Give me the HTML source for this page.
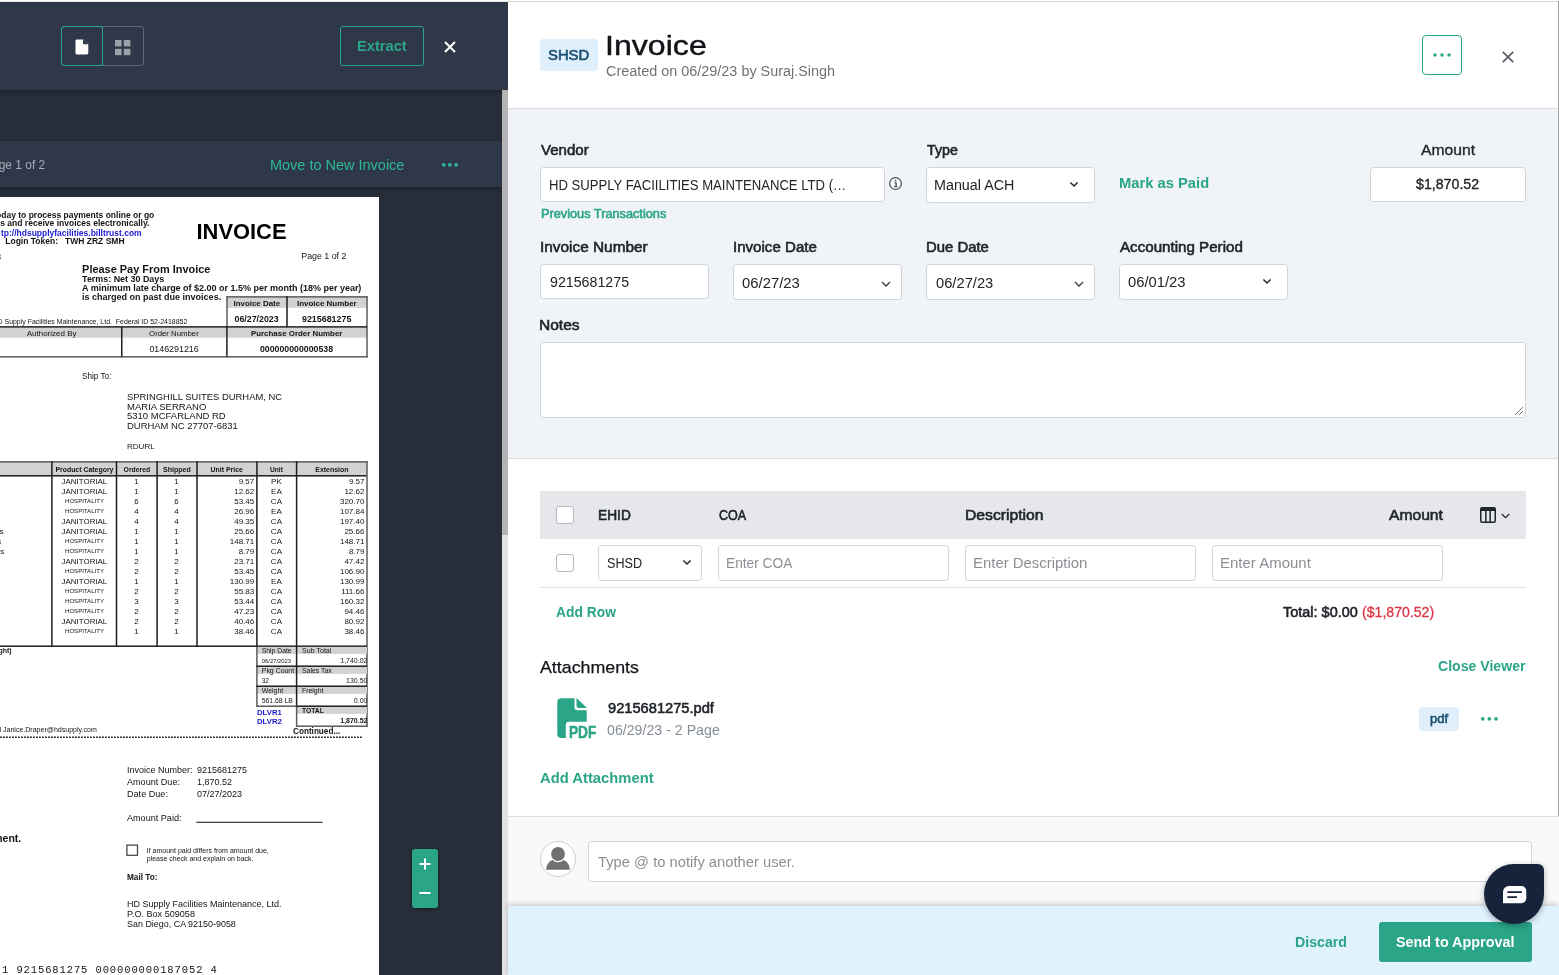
<!DOCTYPE html>
<html><head><meta charset="utf-8"><title>Invoice</title>
<style>
html,body{margin:0;padding:0}
body{width:1559px;height:975px;overflow:hidden;position:relative;background:#fff;font-family:"Liberation Sans",sans-serif;color:#212529}
.a{position:absolute;box-sizing:border-box}
.t{position:absolute;white-space:pre;line-height:1;display:block;transform-origin:0 0}
.inp{position:absolute;box-sizing:border-box;background:#fff;border:1px solid #ced4da;border-radius:3.5px}
.cb{position:absolute;box-sizing:border-box;background:#fff;border:1px solid #b3b9bf;border-radius:3px;width:18px;height:18px}
svg{position:absolute;overflow:visible}
</style></head><body>

<!-- ================= LEFT PANEL ================= -->
<div class="a" style="left:0;top:0;width:508px;height:975px;overflow:hidden">
<div class="a" style="left:0;top:2px;width:508px;height:973px;background:#272e3a"></div>
<div class="a" style="left:0;top:1px;width:508px;height:1px;background:#eceff1"></div>
<!-- viewer backdrop + pdf page -->
<div id="pdf" class="a" style="left:0;top:197px;width:379px;height:778px;background:#fff;overflow:hidden">
<svg width="379" height="778" viewBox="0 0 379 778" style="left:0;top:0"><g transform="translate(0,-197)"><rect x="227" y="297" width="140" height="10.8" fill="#d2d2d2"/><rect x="-5" y="327.5" width="372" height="10.2" fill="#d2d2d2"/><rect x="226.3" y="296.1" width="141.39999999999998" height="1.5" fill="#5c5c5c"/><rect x="226.25" y="296.1" width="1.5" height="30.799999999999955" fill="#5c5c5c"/><rect x="366.25" y="296.1" width="1.5" height="61.39999999999998" fill="#5c5c5c"/><rect x="286.25" y="296.1" width="1.5" height="30.799999999999955" fill="#1e1e1e"/><rect x="-5" y="326.15" width="372" height="1.5" fill="#1e1e1e"/><rect x="121.0" y="326.9" width="1.5" height="30.600000000000023" fill="#1e1e1e"/><rect x="226.15" y="326.9" width="1.5" height="30.600000000000023" fill="#1e1e1e"/><rect x="-5" y="356.05" width="372.7" height="1.5" fill="#5c5c5c"/><rect x="-5" y="462" width="372" height="13.5" fill="#d2d2d2"/><rect x="-5" y="461.1" width="372.7" height="1.5" fill="#5c5c5c"/><rect x="-5" y="475.05" width="372" height="1.5" fill="#1e1e1e"/><rect x="51.15" y="461.1" width="1.5" height="185.79999999999995" fill="#1e1e1e"/><rect x="115.75" y="461.1" width="1.5" height="185.79999999999995" fill="#1e1e1e"/><rect x="156.35" y="461.1" width="1.5" height="185.79999999999995" fill="#1e1e1e"/><rect x="196.25" y="461.1" width="1.5" height="185.79999999999995" fill="#1e1e1e"/><rect x="256.15" y="461.1" width="1.5" height="185.79999999999995" fill="#1e1e1e"/><rect x="295.85" y="461.1" width="1.5" height="185.79999999999995" fill="#1e1e1e"/><rect x="366.25" y="461.1" width="1.5" height="265.79999999999995" fill="#5c5c5c"/><rect x="-5" y="645.45" width="372" height="1.5" fill="#1e1e1e"/><rect x="257" y="646.9" width="110" height="7" fill="#d2d2d2"/><rect x="257" y="666.9" width="110" height="7" fill="#d2d2d2"/><rect x="257" y="686.9" width="110" height="7" fill="#d2d2d2"/><rect x="296.6" y="706.9" width="70.4" height="7" fill="#d2d2d2"/><rect x="256.15" y="646.9" width="1.5" height="60.0" fill="#5c5c5c"/><rect x="295.85" y="646" width="1.5" height="60.89999999999998" fill="#1e1e1e"/><rect x="295.85" y="706.9" width="1.5" height="20.0" fill="#5c5c5c"/><rect x="256.2" y="665.45" width="110.80000000000001" height="1.5" fill="#1e1e1e"/><rect x="256.2" y="685.45" width="110.80000000000001" height="1.5" fill="#1e1e1e"/><rect x="256.2" y="705.45" width="40.400000000000034" height="1.5" fill="#5c5c5c"/><rect x="296.6" y="705.45" width="70.39999999999998" height="1.5" fill="#1e1e1e"/><rect x="295.9" y="725.45" width="71.80000000000001" height="1.5" fill="#5c5c5c"/><line x1="0" y1="737.2" x2="362" y2="737.2" stroke="#222" stroke-width="1.4" stroke-dasharray="1.8 1.2"/><rect x="196.25" y="821.75" width="126.25" height="1.1" fill="#222"/><rect x="126.9" y="845.1" width="10.6" height="10.2" fill="none" stroke="#4a4a4a" stroke-width="1.3"/></g></svg>
<div style="position:absolute;left:0;top:0;width:379px;height:778px;will-change:transform">
<span class="t" style="left:-33.23px;top:14.00px;font-size:8.51px;font-weight:700;color:#141414;">Enroll today to process payments online or go</span>
<span class="t" style="left:-34.88px;top:22.00px;font-size:8.54px;font-weight:700;color:#141414;">paperless and receive invoices electronically.</span>
<span class="t" style="left:0.95px;top:32.00px;font-size:8.51px;font-weight:700;color:#1a1ad2;">tp://hdsupplyfacilities.billtrust.com</span>
<span class="t" style="left:5.25px;top:40.00px;font-size:8.5px;font-weight:700;color:#141414;">Login Token:   TWH ZRZ SMH</span>
<span class="t" style="left:-3.80px;top:56.00px;font-size:8.4px;font-weight:700;color:#141414;">8</span>
<span class="t" style="left:196.48px;top:24.00px;font-size:21.92px;font-weight:700;color:#000;">INVOICE</span>
<span class="t" style="left:301.25px;top:55.00px;font-size:8.84px;color:#141414;">Page 1 of 2</span>
<span class="t" style="left:82.10px;top:67.00px;font-size:10.95px;font-weight:700;color:#141414;">Please Pay From Invoice</span>
<span class="t" style="left:82.10px;top:78.00px;font-size:8.93px;font-weight:700;color:#141414;">Terms: Net 30 Days</span>
<span class="t" style="left:82.10px;top:87.00px;font-size:8.99px;font-weight:700;color:#141414;">A minimum late charge of $2.00 or 1.5% per month (18% per year)</span>
<span class="t" style="left:82.10px;top:96.00px;font-size:9.01px;font-weight:700;color:#141414;">is charged on past due invoices.</span>
<span class="t" style="left:233.52px;top:103.00px;font-size:7.92px;font-weight:700;color:#141414;">Invoice Date</span>
<span class="t" style="left:297.00px;top:103.00px;font-size:7.96px;font-weight:700;color:#141414;">Invoice Number</span>
<span class="t" style="left:234.52px;top:118.00px;font-size:8.82px;font-weight:700;color:#141414;">06/27/2023</span>
<span class="t" style="left:302.00px;top:118.00px;font-size:8.88px;font-weight:700;color:#141414;">9215681275</span>
<span class="t" style="left:-7.49px;top:122.00px;font-size:6.96px;color:#141414;">HD Supply Facilities Maintenance, Ltd.  Federal ID 52-2418852</span>
<span class="t" style="left:26.75px;top:133.00px;font-size:7.99px;color:#141414;">Authorized By</span>
<span class="t" style="left:149.12px;top:133.00px;font-size:7.78px;color:#141414;">Order Number</span>
<span class="t" style="left:250.88px;top:133.00px;font-size:7.93px;font-weight:700;color:#141414;">Purchase Order Number</span>
<span class="t" style="left:149.38px;top:148.00px;font-size:8.89px;color:#141414;">0146291216</span>
<span class="t" style="left:259.88px;top:148.00px;font-size:8.77px;font-weight:700;color:#141414;">000000000000538</span>
<span class="t" style="left:82.00px;top:176.00px;font-size:8.19px;color:#141414;">Ship To:</span>
<span class="t" style="left:127.00px;top:195.00px;font-size:9.44px;color:#141414;">SPRINGHILL SUITES DURHAM, NC</span>
<span class="t" style="left:127.00px;top:205.00px;font-size:9.52px;color:#141414;">MARIA SERRANO</span>
<span class="t" style="left:127.00px;top:214.00px;font-size:9.51px;color:#141414;">5310 MCFARLAND RD</span>
<span class="t" style="left:127.00px;top:224.00px;font-size:9.45px;color:#141414;">DURHAM NC 27707-6831</span>
<span class="t" style="left:127.00px;top:246.00px;font-size:8.04px;color:#141414;">RDURL</span>
<span class="t" style="left:55.38px;top:270.00px;font-size:6.93px;font-weight:700;color:#141414;">Product Category</span>
<span class="t" style="left:123.62px;top:270.00px;font-size:6.82px;font-weight:700;color:#141414;">Ordered</span>
<span class="t" style="left:163.00px;top:269.00px;font-size:7.04px;font-weight:700;color:#141414;">Shipped</span>
<span class="t" style="left:210.50px;top:270.00px;font-size:6.94px;font-weight:700;color:#141414;">Unit Price</span>
<span class="t" style="left:270.00px;top:270.00px;font-size:6.62px;font-weight:700;color:#141414;">Unit</span>
<span class="t" style="left:315.25px;top:270.00px;font-size:6.96px;font-weight:700;color:#141414;">Extension</span>
<span class="t" style="left:61.55px;top:281.00px;font-size:7.94px;color:#141414;">JANITORIAL</span>
<span class="t" style="left:134.30px;top:281.00px;font-size:8.0px;color:#141414;">1</span>
<span class="t" style="left:174.30px;top:281.00px;font-size:8.0px;color:#141414;">1</span>
<span class="t" style="left:238.68px;top:281.00px;font-size:8.0px;color:#141414;">9.57</span>
<span class="t" style="left:271.08px;top:281.00px;font-size:8.0px;color:#141414;">PK</span>
<span class="t" style="left:348.88px;top:281.00px;font-size:8.0px;color:#141414;">9.57</span>
<span class="t" style="left:61.55px;top:291.00px;font-size:7.94px;color:#141414;">JANITORIAL</span>
<span class="t" style="left:134.30px;top:291.00px;font-size:8.0px;color:#141414;">1</span>
<span class="t" style="left:174.30px;top:291.00px;font-size:8.0px;color:#141414;">1</span>
<span class="t" style="left:234.23px;top:291.00px;font-size:8.0px;color:#141414;">12.62</span>
<span class="t" style="left:271.08px;top:291.00px;font-size:8.0px;color:#141414;">EA</span>
<span class="t" style="left:344.43px;top:291.00px;font-size:8.0px;color:#141414;">12.62</span>
<span class="t" style="left:65.05px;top:301.00px;font-size:6.05px;color:#141414;">HOSPITALITY</span>
<span class="t" style="left:134.30px;top:301.00px;font-size:8.0px;color:#141414;">6</span>
<span class="t" style="left:174.30px;top:301.00px;font-size:8.0px;color:#141414;">6</span>
<span class="t" style="left:234.23px;top:301.00px;font-size:8.0px;color:#141414;">53.45</span>
<span class="t" style="left:270.86px;top:301.00px;font-size:8.0px;color:#141414;">CA</span>
<span class="t" style="left:339.98px;top:301.00px;font-size:8.0px;color:#141414;">320.70</span>
<span class="t" style="left:65.05px;top:311.00px;font-size:6.05px;color:#141414;">HOSPITALITY</span>
<span class="t" style="left:134.30px;top:311.00px;font-size:8.0px;color:#141414;">4</span>
<span class="t" style="left:174.30px;top:311.00px;font-size:8.0px;color:#141414;">4</span>
<span class="t" style="left:234.23px;top:311.00px;font-size:8.0px;color:#141414;">26.96</span>
<span class="t" style="left:271.08px;top:311.00px;font-size:8.0px;color:#141414;">EA</span>
<span class="t" style="left:339.98px;top:311.00px;font-size:8.0px;color:#141414;">107.84</span>
<span class="t" style="left:61.55px;top:321.00px;font-size:7.94px;color:#141414;">JANITORIAL</span>
<span class="t" style="left:134.30px;top:321.00px;font-size:8.0px;color:#141414;">4</span>
<span class="t" style="left:174.30px;top:321.00px;font-size:8.0px;color:#141414;">4</span>
<span class="t" style="left:234.23px;top:321.00px;font-size:8.0px;color:#141414;">49.35</span>
<span class="t" style="left:270.86px;top:321.00px;font-size:8.0px;color:#141414;">CA</span>
<span class="t" style="left:339.98px;top:321.00px;font-size:8.0px;color:#141414;">197.40</span>
<span class="t" style="left:61.55px;top:331.00px;font-size:7.94px;color:#141414;">JANITORIAL</span>
<span class="t" style="left:134.30px;top:331.00px;font-size:8.0px;color:#141414;">1</span>
<span class="t" style="left:174.30px;top:331.00px;font-size:8.0px;color:#141414;">1</span>
<span class="t" style="left:234.23px;top:331.00px;font-size:8.0px;color:#141414;">25.66</span>
<span class="t" style="left:270.86px;top:331.00px;font-size:8.0px;color:#141414;">CA</span>
<span class="t" style="left:344.43px;top:331.00px;font-size:8.0px;color:#141414;">25.66</span>
<span class="t" style="left:65.05px;top:341.00px;font-size:6.05px;color:#141414;">HOSPITALITY</span>
<span class="t" style="left:134.30px;top:341.00px;font-size:8.0px;color:#141414;">1</span>
<span class="t" style="left:174.30px;top:341.00px;font-size:8.0px;color:#141414;">1</span>
<span class="t" style="left:229.78px;top:341.00px;font-size:8.0px;color:#141414;">148.71</span>
<span class="t" style="left:270.86px;top:341.00px;font-size:8.0px;color:#141414;">CA</span>
<span class="t" style="left:339.98px;top:341.00px;font-size:8.0px;color:#141414;">148.71</span>
<span class="t" style="left:65.05px;top:351.00px;font-size:6.05px;color:#141414;">HOSPITALITY</span>
<span class="t" style="left:134.30px;top:351.00px;font-size:8.0px;color:#141414;">1</span>
<span class="t" style="left:174.30px;top:351.00px;font-size:8.0px;color:#141414;">1</span>
<span class="t" style="left:238.68px;top:351.00px;font-size:8.0px;color:#141414;">8.79</span>
<span class="t" style="left:270.86px;top:351.00px;font-size:8.0px;color:#141414;">CA</span>
<span class="t" style="left:348.88px;top:351.00px;font-size:8.0px;color:#141414;">8.79</span>
<span class="t" style="left:61.55px;top:361.00px;font-size:7.94px;color:#141414;">JANITORIAL</span>
<span class="t" style="left:134.30px;top:361.00px;font-size:8.0px;color:#141414;">2</span>
<span class="t" style="left:174.30px;top:361.00px;font-size:8.0px;color:#141414;">2</span>
<span class="t" style="left:234.23px;top:361.00px;font-size:8.0px;color:#141414;">23.71</span>
<span class="t" style="left:270.86px;top:361.00px;font-size:8.0px;color:#141414;">CA</span>
<span class="t" style="left:344.43px;top:361.00px;font-size:8.0px;color:#141414;">47.42</span>
<span class="t" style="left:65.05px;top:371.00px;font-size:6.05px;color:#141414;">HOSPITALITY</span>
<span class="t" style="left:134.30px;top:371.00px;font-size:8.0px;color:#141414;">2</span>
<span class="t" style="left:174.30px;top:371.00px;font-size:8.0px;color:#141414;">2</span>
<span class="t" style="left:234.23px;top:371.00px;font-size:8.0px;color:#141414;">53.45</span>
<span class="t" style="left:270.86px;top:371.00px;font-size:8.0px;color:#141414;">CA</span>
<span class="t" style="left:339.98px;top:371.00px;font-size:8.0px;color:#141414;">106.90</span>
<span class="t" style="left:61.55px;top:381.00px;font-size:7.94px;color:#141414;">JANITORIAL</span>
<span class="t" style="left:134.30px;top:381.00px;font-size:8.0px;color:#141414;">1</span>
<span class="t" style="left:174.30px;top:381.00px;font-size:8.0px;color:#141414;">1</span>
<span class="t" style="left:229.78px;top:381.00px;font-size:8.0px;color:#141414;">130.99</span>
<span class="t" style="left:271.08px;top:381.00px;font-size:8.0px;color:#141414;">EA</span>
<span class="t" style="left:339.98px;top:381.00px;font-size:8.0px;color:#141414;">130.99</span>
<span class="t" style="left:65.05px;top:391.00px;font-size:6.05px;color:#141414;">HOSPITALITY</span>
<span class="t" style="left:134.30px;top:391.00px;font-size:8.0px;color:#141414;">2</span>
<span class="t" style="left:174.30px;top:391.00px;font-size:8.0px;color:#141414;">2</span>
<span class="t" style="left:234.23px;top:391.00px;font-size:8.0px;color:#141414;">55.83</span>
<span class="t" style="left:270.86px;top:391.00px;font-size:8.0px;color:#141414;">CA</span>
<span class="t" style="left:341.17px;top:391.00px;font-size:8.0px;color:#141414;">111.66</span>
<span class="t" style="left:65.05px;top:401.00px;font-size:6.05px;color:#141414;">HOSPITALITY</span>
<span class="t" style="left:134.30px;top:401.00px;font-size:8.0px;color:#141414;">3</span>
<span class="t" style="left:174.30px;top:401.00px;font-size:8.0px;color:#141414;">3</span>
<span class="t" style="left:234.23px;top:401.00px;font-size:8.0px;color:#141414;">53.44</span>
<span class="t" style="left:270.86px;top:401.00px;font-size:8.0px;color:#141414;">CA</span>
<span class="t" style="left:339.98px;top:401.00px;font-size:8.0px;color:#141414;">160.32</span>
<span class="t" style="left:65.05px;top:411.00px;font-size:6.05px;color:#141414;">HOSPITALITY</span>
<span class="t" style="left:134.30px;top:411.00px;font-size:8.0px;color:#141414;">2</span>
<span class="t" style="left:174.30px;top:411.00px;font-size:8.0px;color:#141414;">2</span>
<span class="t" style="left:234.23px;top:411.00px;font-size:8.0px;color:#141414;">47.23</span>
<span class="t" style="left:270.86px;top:411.00px;font-size:8.0px;color:#141414;">CA</span>
<span class="t" style="left:344.43px;top:411.00px;font-size:8.0px;color:#141414;">94.46</span>
<span class="t" style="left:61.55px;top:421.00px;font-size:7.94px;color:#141414;">JANITORIAL</span>
<span class="t" style="left:134.30px;top:421.00px;font-size:8.0px;color:#141414;">2</span>
<span class="t" style="left:174.30px;top:421.00px;font-size:8.0px;color:#141414;">2</span>
<span class="t" style="left:234.23px;top:421.00px;font-size:8.0px;color:#141414;">40.46</span>
<span class="t" style="left:270.86px;top:421.00px;font-size:8.0px;color:#141414;">CA</span>
<span class="t" style="left:344.43px;top:421.00px;font-size:8.0px;color:#141414;">80.92</span>
<span class="t" style="left:65.05px;top:431.00px;font-size:6.05px;color:#141414;">HOSPITALITY</span>
<span class="t" style="left:134.30px;top:431.00px;font-size:8.0px;color:#141414;">1</span>
<span class="t" style="left:174.30px;top:431.00px;font-size:8.0px;color:#141414;">1</span>
<span class="t" style="left:234.23px;top:431.00px;font-size:8.0px;color:#141414;">38.46</span>
<span class="t" style="left:270.86px;top:431.00px;font-size:8.0px;color:#141414;">CA</span>
<span class="t" style="left:344.43px;top:431.00px;font-size:8.0px;color:#141414;">38.46</span>
<span class="t" style="left:-0.40px;top:331.00px;font-size:8.0px;color:#141414;">s</span>
<span class="t" style="left:-2.80px;top:341.00px;font-size:8.0px;color:#141414;">s</span>
<span class="t" style="left:-5.58px;top:351.00px;font-size:8.0px;color:#141414;">Cs</span>
<span class="t" style="left:-1.58px;top:450.00px;font-size:7px;font-weight:700;color:#141414;">ght)</span>
<span class="t" style="left:261.75px;top:451.00px;font-size:6.81px;color:#141414;">Ship Date</span>
<span class="t" style="left:302.00px;top:451.00px;font-size:7.09px;color:#141414;">Sub Total</span>
<span class="t" style="left:261.75px;top:462.00px;font-size:5.86px;color:#141414;">06/27/2023</span>
<span class="t" style="left:340.25px;top:460.00px;font-size:7px;color:#141414;">1,740.02</span>
<span class="t" style="left:261.75px;top:471.00px;font-size:6.95px;color:#141414;">Pkg Count</span>
<span class="t" style="left:302.00px;top:471.00px;font-size:6.92px;color:#141414;">Sales Tax</span>
<span class="t" style="left:261.75px;top:481.00px;font-size:6.5px;color:#141414;">32</span>
<span class="t" style="left:346.08px;top:480.00px;font-size:7px;color:#141414;">130.50</span>
<span class="t" style="left:261.75px;top:491.00px;font-size:6.93px;color:#141414;">Weight</span>
<span class="t" style="left:302.00px;top:491.00px;font-size:6.89px;color:#141414;">Freight</span>
<span class="t" style="left:261.75px;top:501.00px;font-size:6.84px;color:#141414;">561.68 LB</span>
<span class="t" style="left:353.87px;top:500.00px;font-size:7px;color:#141414;">0.00</span>
<span class="t" style="left:302.00px;top:511.00px;font-size:6.73px;font-weight:700;color:#141414;">TOTAL</span>
<span class="t" style="left:340.25px;top:520.00px;font-size:7px;font-weight:700;color:#141414;">1,870.52</span>
<span class="t" style="left:257.00px;top:512.00px;font-size:7.76px;font-weight:700;color:#1a1ad2;">DLVR1</span>
<span class="t" style="left:257.00px;top:521.00px;font-size:7.76px;font-weight:700;color:#1a1ad2;">DLVR2</span>
<span class="t" style="left:-16.55px;top:529.00px;font-size:7.04px;color:#141414;">Email Janice.Draper@hdsupply.com</span>
<span class="t" style="left:293.00px;top:531.00px;font-size:8.18px;font-weight:700;color:#141414;">Continued...</span>
<span class="t" style="left:127.00px;top:569.00px;font-size:9.0px;color:#141414;">Invoice Number:</span>
<span class="t" style="left:197.00px;top:569.00px;font-size:8.99px;color:#141414;">9215681275</span>
<span class="t" style="left:127.00px;top:581.00px;font-size:9.08px;color:#141414;">Amount Due:</span>
<span class="t" style="left:197.00px;top:581.00px;font-size:8.99px;color:#141414;">1,870.52</span>
<span class="t" style="left:127.00px;top:593.00px;font-size:9.11px;color:#141414;">Date Due:</span>
<span class="t" style="left:197.00px;top:593.00px;font-size:8.99px;color:#141414;">07/27/2023</span>
<span class="t" style="left:127.00px;top:617.00px;font-size:9.08px;color:#141414;">Amount Paid:</span>
<span class="t" style="left:-24.88px;top:636.00px;font-size:10.5px;font-weight:700;color:#141414;">payment.</span>
<span class="t" style="left:146.75px;top:650.00px;font-size:7.01px;color:#141414;">If amount paid differs from amount due,</span>
<span class="t" style="left:146.75px;top:658.00px;font-size:6.99px;color:#141414;">please check and explain on back.</span>
<span class="t" style="left:127.00px;top:677.00px;font-size:8.25px;font-weight:700;color:#141414;">Mail To:</span>
<span class="t" style="left:127.00px;top:703.00px;font-size:9.01px;color:#141414;">HD Supply Facilities Maintenance, Ltd.</span>
<span class="t" style="left:127.00px;top:713.00px;font-size:9.08px;color:#141414;">P.O. Box 509058</span>
<span class="t" style="left:127.00px;top:723.00px;font-size:8.95px;color:#141414;">San Diego, CA 92150-9058</span>
<span class="t" style="left:2.00px;top:768.00px;font-size:10.5px;letter-spacing:0.889px;color:#141414;font-family:'Liberation Mono',monospace;">1 9215681275 000000000187052 4</span>
</div>
</div>
<!-- page header bar -->
<div class="a" style="left:0;top:141px;width:502px;height:46px;background:#2f3848;box-shadow:0 2px 5px rgba(0,0,0,.35)"></div>
<!-- top bar -->
<div class="a" style="left:0;top:2px;width:508px;height:88px;background:#2f3848;box-shadow:0 2px 4px rgba(0,0,0,.3)"></div>
<!-- scrollbar -->
<div class="a" style="left:502px;top:90px;width:6px;height:885px;background:#e2e2e2"></div>
<div class="a" style="left:502px;top:90px;width:6px;height:445px;background:#b4b4b4"></div>
<!-- view toggle -->
<div class="a" style="left:61px;top:26px;width:83px;height:40px;border:1px solid #5d6675;border-radius:3px"></div>
<div class="a" style="left:61px;top:26px;width:42px;height:40px;border:1px solid #2aa587;border-radius:3px 0 0 3px"></div>
<svg style="left:75.2px;top:39px" width="13.8" height="16" viewBox="0 0 14 17" preserveAspectRatio="none"><path d="M2 0.5h6.2l5.3 5.3V15a1.5 1.5 0 0 1-1.5 1.5H2A1.5 1.5 0 0 1 .5 15V2A1.5 1.5 0 0 1 2 .5z" fill="#fff"/><path d="M8.2 .5v4.2a1 1 0 0 0 1 1h4.3z" fill="#2f3848"/></svg>
<svg style="left:115.4px;top:39.5px" width="15.4" height="15.2" viewBox="0 0 15.4 15.2"><g fill="#9b9fa7"><rect x="0" y="0" width="6.6" height="6.4"/><rect x="8.8" y="0" width="6.6" height="6.4"/><rect x="0" y="8.800" width="6.6" height="6.4"/><rect x="8.8" y="8.800" width="6.6" height="6.4"/></g></svg>
<!-- extract -->
<div class="a" style="left:340px;top:26px;width:84px;height:40px;border:1px solid #2aa587;border-radius:3px"></div>
<svg style="left:444px;top:41px" width="12" height="12" viewBox="0 0 12 12"><path d="M1 1L11 11M11 1L1 11" stroke="#fff" stroke-width="2" fill="none"/></svg>
<!-- dots -->
<svg style="left:441px;top:162px" width="18" height="6" viewBox="0 0 18 6"><g fill="#2db898"><circle cx="2.75" cy="2.800" r="1.900"/><circle cx="8.9" cy="2.800" r="1.900"/><circle cx="15.1" cy="2.800" r="1.900"/></g></svg>
<!-- zoom control -->
<div class="a" style="left:412px;top:849px;width:26px;height:59px;background:#2aa587;border-radius:3px;box-shadow:0 1px 4px rgba(0,0,0,.4)"></div>
<svg style="left:419px;top:858px" width="12" height="12" viewBox="0 0 12 12"><path d="M6 0.5V11.5M0.5 6H11.5" stroke="#fff" stroke-width="2" fill="none"/></svg>
<svg style="left:419px;top:887px" width="12" height="12" viewBox="0 0 12 12"><path d="M0.5 6H11.5" stroke="#fff" stroke-width="2" fill="none"/></svg>

</div>
<!-- ================= RIGHT PANEL ================= -->
<div class="a" style="left:508px;top:1px;width:1051px;height:1px;background:#d4d4d4"></div>
<div class="a" style="left:508px;top:108px;width:1050px;height:351px;background:#f0f4f8;border-top:1px solid #d9dee3;border-bottom:1px solid #d9dee3"></div>
<div class="a" style="left:508px;top:816px;width:1051px;height:90px;background:#f8f9fa;border-top:1px solid #dee2e6"></div>
<div class="a" style="left:508px;top:906px;width:1051px;height:69px;background:#e0f2fe;box-shadow:0 -2px 5px rgba(0,0,0,.18)"></div>
<div class="a" style="left:1558px;top:1px;width:1px;height:815px;background:#a2a2a2"></div>

<!-- header -->
<div class="a" style="left:540px;top:39px;width:57.5px;height:32px;background:#dff0fc;border-radius:3px"></div>
<div class="a" style="left:1422px;top:35px;width:40px;height:40px;border:1px solid #2aa587;border-radius:4px;background:#fff"></div>
<svg style="left:1433.3px;top:52px" width="18" height="6" viewBox="0 0 18 6"><g fill="#2aa587"><circle cx="2" cy="3" r="1.75"/><circle cx="9" cy="3" r="1.75"/><circle cx="16" cy="3" r="1.75"/></g></svg>
<svg style="left:1502px;top:51px" width="12" height="12" viewBox="0 0 12 12"><path d="M0.8 0.8L11.2 11.2M11.2 0.8L0.8 11.2" stroke="#5a5f66" stroke-width="1.8" fill="none"/></svg>

<!-- form inputs -->
<div class="inp" style="left:540px;top:167px;width:345px;height:35px"></div>
<svg style="left:888.95px;top:177.4px" width="13" height="13" viewBox="0 0 13 13"><circle cx="6.5" cy="6.5" r="5.850" fill="#fff" stroke="#50565c" stroke-width="1.300"/><path d="M5.300 5.900H7.100V9.500M5.100 9.500H8.300" stroke="#50565c" stroke-width="1.300" fill="none"/><circle cx="6.500" cy="3.700" r=".9" fill="#50565c"/></svg>
<div class="inp" style="left:926px;top:167px;width:169px;height:36px"></div>
<svg style="left:1069.05px;top:181.45px" width="10" height="7" viewBox="0 0 10 7"><path d="M1.400 1.500L5 5L8.600 1.500" stroke="#212529" stroke-width="1.500" fill="none"/></svg>
<div class="inp" style="left:1370px;top:167px;width:156px;height:35px"></div>

<div class="inp" style="left:540px;top:264px;width:169px;height:35px"></div>
<div class="inp" style="left:733px;top:264px;width:169px;height:36px"></div>
<svg style="left:881px;top:281px" width="10" height="6" viewBox="0 0 10 6"><path d="M1 1L5 5L9 1" stroke="#343a40" stroke-width="1.3" fill="none"/></svg>
<div class="inp" style="left:926px;top:264px;width:169px;height:36px"></div>
<svg style="left:1074px;top:281px" width="10" height="6" viewBox="0 0 10 6"><path d="M1 1L5 5L9 1" stroke="#343a40" stroke-width="1.3" fill="none"/></svg>
<div class="inp" style="left:1119px;top:264px;width:169px;height:36px"></div>
<svg style="left:1261.75px;top:278.20px" width="10" height="7" viewBox="0 0 10 7"><path d="M1.400 1.500L5 5L8.600 1.500" stroke="#212529" stroke-width="1.500" fill="none"/></svg>
<div class="inp" style="left:540px;top:342px;width:986px;height:76px"></div>
<svg style="left:1514px;top:406px" width="10" height="10" viewBox="0 0 10 10"><path d="M9 1L1 9M9 5L5 9" stroke="#777" stroke-width="1" fill="none"/></svg>

<!-- line items table -->
<div class="a" style="left:540px;top:491px;width:986px;height:48px;background:#e5e7eb"></div>
<div class="cb" style="left:556px;top:506px"></div>
<div class="cb" style="left:556px;top:554px"></div>
<div class="inp" style="left:598px;top:545px;width:104px;height:36px"></div>
<svg style="left:681.75px;top:559.40px" width="10" height="7" viewBox="0 0 10 7"><path d="M1.400 1.500L5 5L8.600 1.500" stroke="#212529" stroke-width="1.500" fill="none"/></svg>
<div class="inp" style="left:718px;top:545px;width:231px;height:36px"></div>
<div class="inp" style="left:965px;top:545px;width:231px;height:36px"></div>
<div class="inp" style="left:1212px;top:545px;width:231px;height:36px"></div>
<div class="a" style="left:540px;top:587px;width:986px;height:1px;background:#dee2e6"></div>
<svg style="left:1480px;top:507px" width="16" height="16" viewBox="0 0 16 16"><path d="M2 0h12a2 2 0 0 1 2 2v12a2 2 0 0 1-2 2H2a2 2 0 0 1-2-2V2a2 2 0 0 1 2-2zm-.5 4v10.5h3.6V4zm5.1 0v10.5h2.8V4zm4.3 0v10.5h3.6V4z" fill="#212529" fill-rule="evenodd"/></svg>
<svg style="left:1500.5px;top:513px" width="9" height="6" viewBox="0 0 9 6"><path d="M.8 1L4.5 4.7L8.2 1" stroke="#212529" stroke-width="1.2" fill="none"/></svg>

<!-- attachments -->
<svg style="left:557px;top:698px" width="40" height="40" viewBox="0 0 40 40"><path d="M4.300 .2h13.200v9a3 3 0 0 0 3 3H29.700v11.500H12a3.200 3.200 0 0 0-3.200 3.200V40H4.300a4 4 0 0 1-4-4V4.200a4 4 0 0 1 4-4z" fill="#2aa587"/><path d="M19.5 0l10.5 10h-8a2.5 2.5 0 0 1-2.5-2.5z" fill="#2aa587"/></svg>
<div class="a" style="left:1419px;top:707px;width:40px;height:24px;background:#dff0fc;border-radius:4px"></div>
<svg style="left:1479.5px;top:716px" width="18" height="6" viewBox="0 0 18 6"><g fill="#2aa587"><circle cx="2.7" cy="2.8" r="1.85"/><circle cx="9.3" cy="2.8" r="1.85"/><circle cx="16" cy="2.8" r="1.85"/></g></svg>

<!-- comments -->
<div class="a" style="left:540px;top:841px;width:36px;height:36px;border-radius:50%;background:#fff;border:1px solid #cfcfcf"></div>
<svg style="left:546px;top:847px" width="24" height="24" viewBox="0 0 24 24"><circle cx="12" cy="7" r="6.900" fill="#707070"/><path d="M.2 22.800C.2 17.500 3.600 13.900 6.600 13.100C8 14.500 10 15.300 12 15.300S16 14.500 17.400 13.100C20.400 13.900 23.800 17.500 23.800 22.800z" fill="#707070"/></svg>
<div class="inp" style="left:588px;top:841px;width:944px;height:41px"></div>

<!-- footer -->
<div class="a" style="left:1379px;top:922px;width:153px;height:40px;background:#2aa587;border-radius:3px"></div>
<!-- chat widget -->
<div class="a" style="left:1484px;top:864px;width:60px;height:60px;background:#16233a;border-radius:30px 6px 30px 30px;box-shadow:0 2px 6px rgba(0,0,0,.3)"></div>
<svg style="left:1502.9px;top:885.8px" width="23.3" height="17.3" viewBox="0 0 23.3 17.3"><path d="M6 0h12.300a5 5 0 0 1 5 5v7.300a5 5 0 0 1-5 5H.6a.6.6 0 0 1-.6-.6V6a6 6 0 0 1 6-6z" fill="#fff"/><path d="M4.400 6.100H18.900M4.400 11.100H14" stroke="#16233a" stroke-width="1.800" fill="none"/></svg>

<div id="uitext" style="position:absolute;left:0;top:0;width:1559px;height:975px;will-change:transform">
<span class="t" style="left:-16.00px;top:159.00px;font-size:12px;transform:scaleX(0.9966);color:#a7aeb9;">Page 1 of 2</span>
<span class="t" style="left:269.67px;top:158.00px;font-size:14px;transform:scaleX(1.0344);color:#2db898;">Move to New Invoice</span>
<span class="t" style="left:357.20px;top:39.00px;font-size:14px;font-weight:700;transform:scaleX(1.0459);color:#2aa587;">Extract</span>
<span class="t" style="left:548.30px;top:48.00px;font-size:14.5px;transform:scaleX(1.0222);color:#1c4f72;-webkit-text-stroke:0.6px #1c4f72;">SHSD</span>
<span class="t" style="left:605.31px;top:32.00px;font-size:28px;transform:scaleX(1.1469);color:#111418;-webkit-text-stroke:0.45px #111418;">Invoice</span>
<span class="t" style="left:606.20px;top:64.00px;font-size:14px;transform:scaleX(1.0292);color:#6e7276;">Created on 06/29/23 by Suraj.Singh</span>
<span class="t" style="left:540.60px;top:143.00px;font-size:14px;-webkit-text-stroke:0.55px #212529;transform:scaleX(1.0736);color:#212529;">Vendor</span>
<span class="t" style="left:926.85px;top:143.00px;font-size:14px;-webkit-text-stroke:0.55px #212529;transform:scaleX(1.0142);color:#212529;">Type</span>
<span class="t" style="left:1420.60px;top:142.00px;font-size:15px;transform:scaleX(1.0471);color:#212529;-webkit-text-stroke:0.35px #212529;">Amount</span>
<span class="t" style="left:548.56px;top:178.00px;font-size:14px;transform:scaleX(0.9362);color:#212529;">HD SUPPLY FACIILITIES MAINTENANCE LTD (…</span>
<span class="t" style="left:934.48px;top:178.00px;font-size:14px;transform:scaleX(1.0226);color:#212529;">Manual ACH</span>
<span class="t" style="left:1118.92px;top:175.00px;font-size:15px;font-weight:700;transform:scaleX(0.9829);color:#2aa587;">Mark as Paid</span>
<span class="t" style="left:1416.20px;top:176.00px;font-size:15px;transform:scaleX(0.9459);color:#212529;-webkit-text-stroke:0.35px #212529;">$1,870.52</span>
<span class="t" style="left:540.60px;top:208.00px;font-size:12px;-webkit-text-stroke:0.55px #2aa587;transform:scaleX(1.0611);color:#2aa587;">Previous Transactions</span>
<span class="t" style="left:539.50px;top:240.00px;font-size:14px;-webkit-text-stroke:0.55px #212529;transform:scaleX(1.0988);color:#212529;">Invoice Number</span>
<span class="t" style="left:732.52px;top:240.00px;font-size:14px;-webkit-text-stroke:0.55px #212529;transform:scaleX(1.0774);color:#212529;">Invoice Date</span>
<span class="t" style="left:925.79px;top:240.00px;font-size:14px;-webkit-text-stroke:0.55px #212529;transform:scaleX(1.0624);color:#212529;">Due Date</span>
<span class="t" style="left:1119.85px;top:240.00px;font-size:14px;-webkit-text-stroke:0.55px #212529;transform:scaleX(1.0812);color:#212529;">Accounting Period</span>
<span class="t" style="left:549.50px;top:275.00px;font-size:14px;transform:scaleX(1.015);color:#212529;">9215681275</span>
<span class="t" style="left:742.00px;top:276.00px;font-size:14px;transform:scaleX(1.0601);color:#212529;">06/27/23</span>
<span class="t" style="left:935.50px;top:276.00px;font-size:14px;transform:scaleX(1.051);color:#212529;">06/27/23</span>
<span class="t" style="left:1128.00px;top:275.00px;font-size:14px;transform:scaleX(1.0556);color:#212529;">06/01/23</span>
<span class="t" style="left:539.49px;top:318.00px;font-size:14px;-webkit-text-stroke:0.55px #212529;transform:scaleX(1.1104);color:#212529;">Notes</span>
<span class="t" style="left:597.87px;top:508.00px;font-size:14px;-webkit-text-stroke:0.55px #212529;transform:scaleX(0.9818);color:#212529;">EHID</span>
<span class="t" style="left:718.60px;top:508.00px;font-size:14px;-webkit-text-stroke:0.55px #212529;transform:scaleX(0.8952);color:#212529;">COA</span>
<span class="t" style="left:964.98px;top:508.00px;font-size:14px;-webkit-text-stroke:0.55px #212529;transform:scaleX(1.121);color:#212529;">Description</span>
<span class="t" style="left:1389.40px;top:508.00px;font-size:14px;-webkit-text-stroke:0.55px #212529;transform:scaleX(1.1167);color:#212529;">Amount</span>
<span class="t" style="left:607.00px;top:556.00px;font-size:14px;transform:scaleX(0.9024);color:#212529;">SHSD</span>
<span class="t" style="left:726.02px;top:556.00px;font-size:14px;transform:scaleX(0.9799);color:#8b8f94;">Enter COA</span>
<span class="t" style="left:973.18px;top:556.00px;font-size:14px;transform:scaleX(1.0654);color:#8b8f94;">Enter Description</span>
<span class="t" style="left:1220.13px;top:556.00px;font-size:14px;transform:scaleX(1.0707);color:#8b8f94;">Enter Amount</span>
<span class="t" style="left:556.25px;top:605.00px;font-size:14px;font-weight:700;transform:scaleX(0.9874);color:#2aa587;">Add Row</span>
<span class="t" style="left:1282.70px;top:605.00px;font-size:14px;-webkit-text-stroke:0.55px #212529;transform:scaleX(1.0331);color:#212529;">Total: $0.00</span>
<span class="t" style="left:1361.80px;top:605.00px;font-size:14px;transform:scaleX(1.0078);color:#dc3545;-webkit-text-stroke:0.3px #dc3545;">($1,870.52)</span>
<span class="t" style="left:540.20px;top:660.00px;font-size:16.8px;transform:scaleX(1.0605);color:#111418;-webkit-text-stroke:0.25px #111418;">Attachments</span>
<span class="t" style="left:1437.90px;top:659.00px;font-size:14px;font-weight:700;transform:scaleX(1.0063);color:#2aa587;">Close Viewer</span>
<span class="t" style="left:607.60px;top:701.00px;font-size:14px;-webkit-text-stroke:0.55px #212529;transform:scaleX(1.0462);color:#212529;">9215681275.pdf</span>
<span class="t" style="left:607.00px;top:723.00px;font-size:14px;transform:scaleX(1.0132);color:#868e96;">06/29/23 - 2 Page</span>
<span class="t" style="left:1430.20px;top:713.00px;font-size:12px;-webkit-text-stroke:0.55px #1c4f72;transform:scaleX(1.078);color:#1c4f72;">pdf</span>
<span class="t" style="left:540.00px;top:771.00px;font-size:14px;font-weight:700;transform:scaleX(1.0558);color:#2aa587;">Add Attachment</span>
<span class="t" style="left:598.00px;top:855.00px;font-size:14px;transform:scaleX(1.0532);color:#8b8f94;">Type @ to notify another user.</span>
<span class="t" style="left:1294.80px;top:935.00px;font-size:14px;font-weight:700;transform:scaleX(1.0117);color:#2aa587;">Discard</span>
<span class="t" style="left:1395.90px;top:935.00px;font-size:14px;font-weight:700;transform:scaleX(1.026);color:#fff;">Send to Approval</span>
<span class="t" style="left:568.78px;top:725.00px;font-size:16.6px;font-weight:700;transform:scaleX(0.8237);color:#2aa587;-webkit-text-stroke:0.5px #2aa587;">PDF</span>
</div>
</body></html>
